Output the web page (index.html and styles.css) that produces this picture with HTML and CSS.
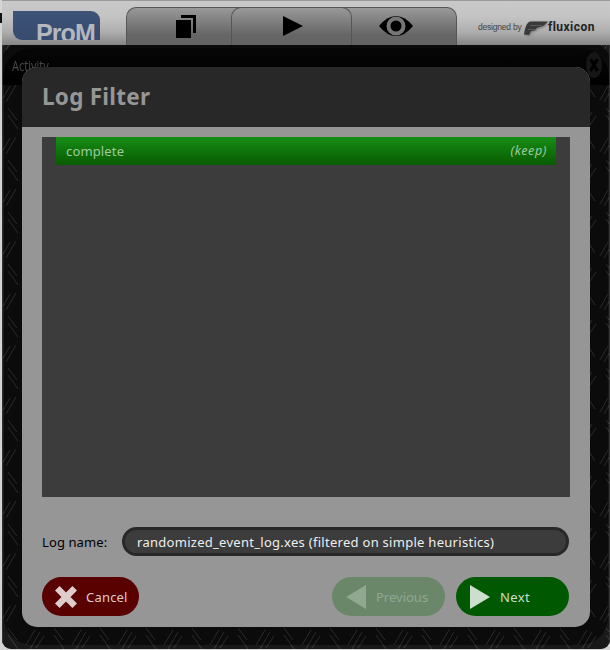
FILE: index.html
```
<!DOCTYPE html>
<html lang="en">
<head>
<meta charset="utf-8">
<title>ProM</title>
<link rel="stylesheet" href="styles.css">
</head>
<body>
<div class="edge-mark"></div>
<div class="window">
  <header class="topbar">
    <div class="logo"><span>ProM</span></div>
    <nav class="tabs">
      <div class="tab tab-left"><svg width="22" height="26" viewBox="0 0 22 26"><path d="M6 1h15v18h-3V4H6z"/><path d="M1 6h15v18H1z"/></svg></div>
      <div class="tab tab-mid"><svg width="22" height="22" viewBox="0 0 22 22"><path d="M1 1L21 11 1 21z"/></svg></div>
      <div class="tab tab-right"><svg width="36" height="22" viewBox="0 0 36 22"><path d="M1 11Q9 1 18 1T35 11Q27 21 18 21T1 11z"/><circle cx="18" cy="11" r="7.500" fill="none" stroke="#777" stroke-width="4"/></svg></div>
    </nav>
    <div class="brand">
      <span class="designed">designed by</span>
      <svg class="wing" width="26" height="17" viewBox="0 0 26 17"><path d="M7 1.500h18C22 5 19 7 15 7.500h-1C13 10 11 11 8 11L6 15 1 14.500C2 9 3 3 7 1.500z" fill="#3a3a3a"/><path d="M7 5.500h12M5 9.500h7" stroke="#595959" fill="none"/></svg>
      <span class="fluxicon">fluxicon</span>
    </div>
  </header>
  <main class="workspace">
    <svg class="texture" width="608" height="604">
      <defs>
        <pattern id="plate" x="-2" y="5" width="46" height="52" patternUnits="userSpaceOnUse">
          <g fill="none" stroke="#4a4a4a" stroke-width=".8">
            <path d="M7 6l9 12M7 13l10 14"/>
            <path d="M1 50l8-14M5 52l10-17"/>
            <path d="M25 23l9-15M29 27l10-17M35 26l8-12"/>
            <path d="M25 34l7 11M33 33l9 14"/>
          </g>
        </pattern>
      </defs>
      <rect width="608" height="604" fill="url(#plate)"/>
    </svg>
    <div class="panel-shade"></div>
    <div class="activity-bar"><span>Activity</span></div>
    <div class="close"><svg width="16" height="26" viewBox="0 0 16 26"><ellipse cx="8" cy="13" rx="8" ry="13" fill="#161616"/><path d="M4.500 7l7 12M11.500 7l-7 12" stroke="#000" stroke-width="3"/></svg></div>
  </main>
</div>
<section class="dialog">
  <h1 class="title"><span>Log Filter</span></h1>
  <div class="body">
    <div class="list">
      <div class="row"><span class="row-name">complete</span><em class="row-state">(keep)</em></div>
    </div>
    <div class="field">
      <label class="label" for="log-name">Log name:</label>
      <div class="input" id="log-name"><span>randomized_event_log.xes (filtered on simple heuristics)</span></div>
    </div>
    <div class="actions">
      <div class="button cancel"><svg width="24" height="24" viewBox="0 0 24 24"><path d="M3.300 3.300l17.400 17.400M20.700 3.300l-17.400 17.400" stroke="#dfcccc" stroke-width="6.500"/></svg><span>Cancel</span></div>
      <div class="button previous"><svg width="20" height="24" viewBox="0 0 20 24"><path d="M20 0v24L0 12z" fill="#90a790"/></svg><span>Previous</span></div>
      <div class="button next"><svg width="20" height="24" viewBox="0 0 20 24"><path d="M0 0l20 12L0 24z" fill="#ccdfcc"/></svg><span>Next</span></div>
    </div>
  </div>
</section>
</body>
</html>
```
FILE: styles.css
```
* { box-sizing: border-box; }
body {
  margin: 0;
  width: 610px;
  height: 650px;
  overflow: hidden;
  position: relative;
  background: #d4d4d4;
  font-family: "Noto Sans", "Open Sans", sans-serif;
  font-size: 13px;
}
svg { display: block; flex: none; }
span, em, label { white-space: nowrap; }
.edge-mark { position: absolute; left: 0; top: 13px; width: 2px; height: 10px; background: #111; }
.window { margin-left: 2px; width: 608px; height: 649px; border-radius: 0 0 9px 9px; overflow: hidden; }
.topbar {
  display: flex;
  height: 45px;
  border-top: 1px solid #999;
  background: linear-gradient(#c9c9c9 0%, #c4c4c4 35%, #aeaeae 70%, #858585 100%);
}
.logo {
  width: 87px;
  height: 29px;
  margin: 10px 0 0 11px;
  overflow: hidden;
  border-radius: 0 9px 0 9px;
  background: linear-gradient(#3d5377, #364b6e);
  color: #b4b7bd;
  font-size: 25px;
  font-weight: 700;
  line-height: 29px;
  padding: 8px 0 0 23px;
  font-family: "Liberation Sans", sans-serif;
}
.logo span { display: block; letter-spacing: -0.9px; }
.tabs { display: flex; margin: 6px 0 0 26px; width: 331px; }
.tab {
  display: flex;
  justify-content: center;
  border: 1px solid #555;
  border-bottom: 0;
  height: 38px;
  background: linear-gradient(#999, #666 72%, #636363);
}
.tab-left { width: 116px; margin-right: -11px; padding: 6px 0 0 2px; border-radius: 10px 0 0 0; border-right: 0; }
.tab-mid { width: 121px; padding: 7px 0 0 2px; border-radius: 10px 10px 0 0; position: relative; }
.tab-right { width: 115px; margin-left: -10px; padding: 7px 6px 0 0; border-radius: 0 10px 0 0; border-left: 0; }
.brand { display: flex; margin-left: 21px; color: #444; }
.designed { width: 45px; font: 8.5px/14px "Liberation Sans", sans-serif; margin-top: 19px; letter-spacing: -0.2px; }
.wing { margin: 19px 0 0 0; filter: drop-shadow(1px 1px 1px #777); }
.fluxicon { margin: 17px 0 0 -1px; font: 700 12px/19px Roboto, sans-serif; color: #222; letter-spacing: 0.45px; }
.workspace { position: relative; height: 604px; overflow: hidden; background: #121212; border-left: 1px solid #333; border-right: 1px solid #353535; }
.texture { position: absolute; left: 0; top: 0; }
.panel-shade {
  position: absolute;
  left: 1px;
  right: 1px;
  top: 3px;
  bottom: 4px;
  border-radius: 28px;
  box-shadow: 0 0 0 30px rgba(48, 48, 48, .25);
  background: rgba(0, 0, 0, .34);
}
.activity-bar {
  position: absolute;
  inset: 3px 0 auto 0;
  height: 37px;
  border-radius: 28px 28px 0 0;
  background: linear-gradient(#060606, #000);
  box-shadow: 0 -4px 0 5px #0b0b0b;
  padding: 6px 0 0 9px;
  color: #494949;
  font: 14.5px/24px "Open Sans", sans-serif;
  clip-path: inset(-4px 0 0);
}
.activity-bar span { display: inline-block; transform: scaleX(.76); transform-origin: left; }
.close { position: absolute; left: 583px; top: 7px; }
.dialog {
  position: absolute;
  left: 22px;
  top: 67px;
  width: 568px;
  height: 560px;
  border-radius: 15px;
  overflow: hidden;
  background: #969696;
}
.title {
  margin: 0;
  height: 60px;
  padding: 0 20px;
  background: #282828;
  color: #969696;
  font-size: 22.5px;
  line-height: 59px;
  font-weight: 700;
  letter-spacing: .25px;
}
.body { padding: 10px 20px; }
.list { height: 360px; padding: 0 14px; background: #3c3c3c; }
.row {
  display: flex;
  justify-content: space-between;
  height: 28px;
  padding: 0 9px 0 10px;
  line-height: 28px;
  background: linear-gradient(#168d16, #085b00);
  color: #9fca9f;
}
.row-name { letter-spacing: .15px; }
.row-state { font-size: 12.5px; letter-spacing: .6px; }
.field { display: flex; height: 29px; margin-top: 30px; }
.label { width: 80px; color: #000; line-height: 30px; letter-spacing: .1px; }
.input {
  width: 447px;
  border: 3px solid #282828;
  border-radius: 15px;
  background: #3c3c3c;
  color: #eee;
  line-height: 24px;
  padding-left: 12px;
  letter-spacing: .28px;
}
.actions { display: flex; margin-top: 21px; }
.button { display: flex; align-items: center; height: 39px; border-radius: 20px; }
.cancel { width: 97px; padding-left: 12px; gap: 8px; background: #590000; color: #dfcccc; letter-spacing: .2px; }
.previous { width: 113px; margin-left: 193px; padding-left: 14px; gap: 10px; background: #6a876a; color: #90a790; }
.next { width: 113px; margin-left: 11px; padding-left: 14px; gap: 10px; background: #005900; color: #ccdfcc; letter-spacing: .4px; }
.button span { line-height: 39px; padding-top: 1px; }
```
